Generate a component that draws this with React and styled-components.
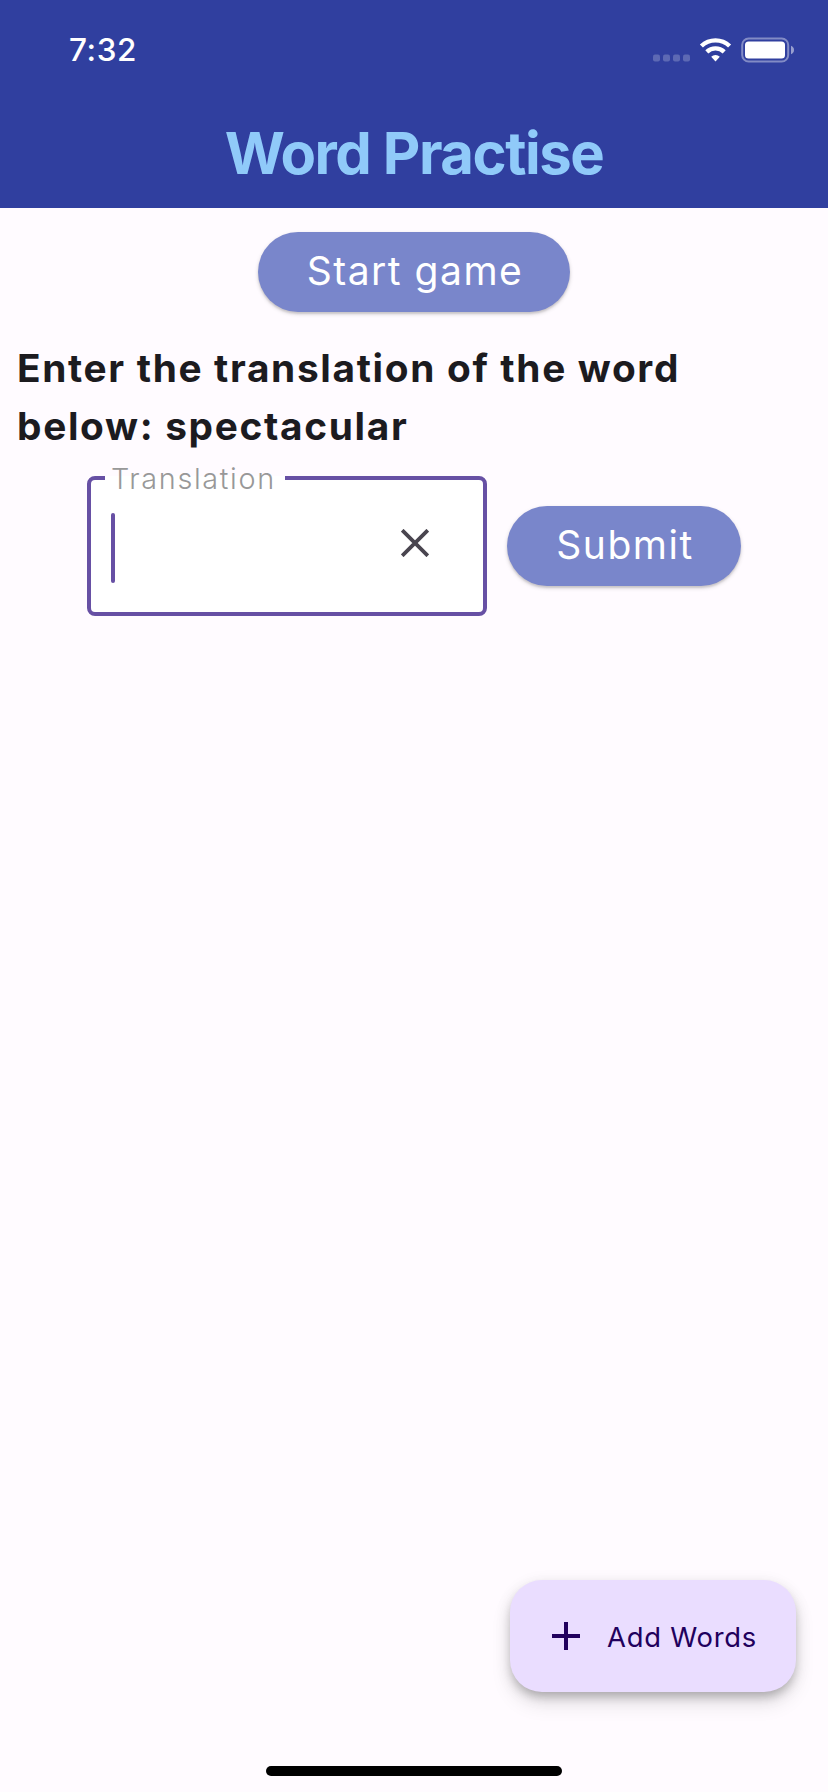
import React from "react";
import styled, { createGlobalStyle } from "styled-components";

const GlobalStyle = createGlobalStyle`
  * { box-sizing: border-box; }
  body { margin: 0; background: #fffbff; font-family: Inter, "Liberation Sans", sans-serif; }
  button { font-family: inherit; border: 0; margin: 0; white-space: nowrap; }
  svg { display: block; flex: none; }
`;

const Screen = styled.div`
  display: flex;
  flex-direction: column;
  width: 828px;
  height: 1792px;
  background: #fffbff;
  color: #1c1b1f;
`;

const Header = styled.header`
  flex: none;
  height: 208px;
  background: #303f9f;
`;

const StatusBar = styled.div`
  display: flex;
  align-items: center;
  justify-content: space-between;
  height: 96px;
  padding: 3px 33px 0 69px;
`;

const Clock = styled.span`
  color: #fff;
  font-size: 31.5px;
  font-weight: 500;
  line-height: 38px;
  letter-spacing: 0.59px;
`;

const StatusIcons = styled.div`
  display: flex;
  align-items: center;
  gap: 9px;
`;

const Toolbar = styled.div`
  display: flex;
  align-items: center;
  justify-content: center;
  height: 112px;
  padding-top: 2px;
`;

const Title = styled.h1`
  margin: 0;
  color: #90caf9;
  font-size: 58px;
  font-weight: 700;
  line-height: 70px;
  letter-spacing: -1.45px;
`;

const Content = styled.main`
  display: flex;
  flex-direction: column;
  flex: 1;
  padding-top: 24px;
`;

const PillButton = styled.button`
  flex: none;
  width: ${(p) => p.$width}px;
  height: 80px;
  padding: 0 0 2px 2px;
  border-radius: 40px;
  background: #7986cb;
  color: #fff;
  font-size: 39px;
  font-weight: 400;
  line-height: 48px;
  letter-spacing: 1.5px;
  align-self: center;
  box-shadow: 0 2px 2px rgba(0, 0, 0, 0.1), 0 2px 4px rgba(0, 0, 0, 0.16);
`;

const Prompt = styled.p`
  margin: 27px 16px 0 17px;
  font-size: 38.8px;
  font-weight: 700;
  line-height: 58px;
  letter-spacing: 1.67px;
`;

const AnswerRow = styled.form`
  display: flex;
  align-items: center;
  justify-content: center;
  gap: 20px;
  margin-top: 21px;
`;

const Field = styled.div`
  position: relative;
  display: flex;
  align-items: center;
  justify-content: space-between;
  width: 400px;
  height: 140px;
  padding: 0 54px 0 20px;
  border: 4px solid #6750a4;
  border-radius: 8px;
  background: #fff;
`;

const FieldLabel = styled.label`
  position: absolute;
  top: -4px;
  left: 14px;
  display: flex;
  align-items: center;
  width: 180px;
  height: 4px;
  padding: 2px 0 0 6px;
  background: #fff;
  color: #989898;
  font-size: 28.8px;
  font-weight: 300;
  line-height: 36px;
  letter-spacing: 1.66px;
`;

const Caret = styled.span`
  width: 4px;
  height: 70px;
  margin-top: 4px;
  border-radius: 2px;
  background: #6750a4;
`;

const ClearIcon = styled.svg`
  margin-top: -6px;
`;

const Footer = styled.footer`
  display: flex;
  flex-direction: column;
  align-items: center;
  flex: none;
  padding: 0 32px 16px;
`;

const AddButton = styled.button`
  display: flex;
  align-items: center;
  align-self: flex-end;
  gap: 27px;
  width: 286px;
  height: 112px;
  padding: 0 0 0 42px;
  border-radius: 32px;
  background: #eaddff;
  color: #21005d;
  box-shadow: 0 6px 10px -2px rgba(0, 0, 0, 0.2), 0 12px 20px rgba(0, 0, 0, 0.1),
    0 4px 16px rgba(0, 0, 0, 0.1);
`;

const AddLabel = styled.span`
  padding-top: 2px;
  font-size: 27.4px;
  font-weight: 400;
  line-height: 34px;
  letter-spacing: 0.75px;
`;

const HomeIndicator = styled.div`
  width: 296px;
  height: 10px;
  margin-top: 74px;
  border-radius: 5px;
  background: #000;
`;

function Signal() {
  return (
    <svg width="38" height="26" viewBox="0 0 38 26" fill="#fff" fillOpacity="0.22">
      {[1, 11, 21, 31].map((x) => (
        <rect key={x} x={x} y="17.5" width="7" height="7" rx="2" />
      ))}
    </svg>
  );
}

function Wifi() {
  return (
    <svg width="33" height="26" viewBox="0 0 33 26" fill="none" stroke="#fff">
      <path d="M2.4 9A20.4 20.4 0 0 1 30.6 9" strokeWidth="4.4" />
      <path d="M7.8 14.8A12.7 12.7 0 0 1 25.2 14.8" strokeWidth="4.4" />
      <path d="M12.2 19.8A6.1 6.1 0 0 1 20.8 19.8L16.5 24.4Z" fill="#fff" stroke="none" />
    </svg>
  );
}

function Battery() {
  return (
    <svg width="54" height="26" viewBox="0 0 54 26">
      <rect x="1.2" y="1.5" width="46" height="23" rx="6.5" fill="none" stroke="#fff" strokeOpacity="0.4" strokeWidth="2" />
      <rect x="4" y="4.5" width="40" height="17" rx="3.5" fill="#fff" />
      <path d="M50 8.8Q53 10 53 13T50 17.2Z" fill="#fff" fillOpacity="0.5" />
    </svg>
  );
}

export default function App() {
  return (
    <>
      <GlobalStyle />
      <Screen>
        <Header>
          <StatusBar>
            <Clock>7:32</Clock>
            <StatusIcons>
              <Signal />
              <Wifi />
              <Battery />
            </StatusIcons>
          </StatusBar>
          <Toolbar>
            <Title>Word Practise</Title>
          </Toolbar>
        </Header>
        <Content>
          <PillButton type="button" $width={312}>Start game</PillButton>
          <Prompt>Enter the translation of the word below: spectacular</Prompt>
          <AnswerRow>
            <Field>
              <FieldLabel>Translation</FieldLabel>
              <Caret />
              <ClearIcon width="28" height="28" viewBox="0 0 28 28" stroke="#49454f" strokeWidth="3.8">
                <path d="M1.2 1.2L26.8 26.8M26.8 1.2L1.2 26.8" />
              </ClearIcon>
            </Field>
            <PillButton type="button" $width={234}>Submit</PillButton>
          </AnswerRow>
        </Content>
        <Footer>
          <AddButton type="button">
            <svg width="28" height="28" viewBox="0 0 28 28" stroke="#21005d" strokeWidth="4">
              <path d="M14 0V28M0 14H28" />
            </svg>
            <AddLabel>Add Words</AddLabel>
          </AddButton>
          <HomeIndicator />
        </Footer>
      </Screen>
    </>
  );
}
